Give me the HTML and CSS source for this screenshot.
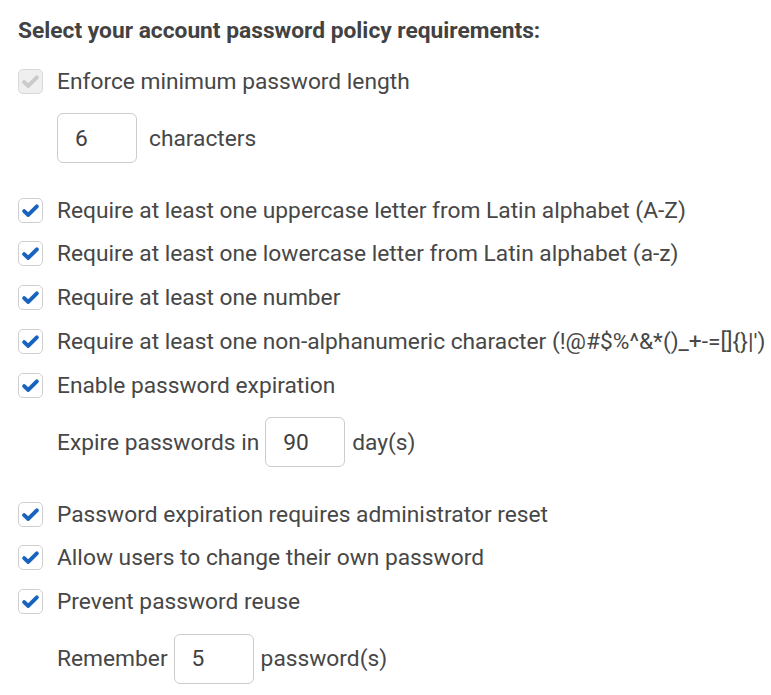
FILE: index.html
```html
<!DOCTYPE html>
<html>
<head>
<meta charset="utf-8">
<link rel="stylesheet" href="styles.css">
</head>
<body>
<div class="policy">
  <h2 class="title">Select your account password policy requirements:</h2>

  <div class="opt first disabled">
    <span class="box"><svg viewBox="0 0 24 24" width="19" height="19"><path d="M4 12.8 L9.2 17.6 L20 6.8" fill="none" stroke="#cacaca" stroke-width="5" stroke-linecap="round" stroke-linejoin="round"/></svg></span>
    <span class="label">Enforce minimum password length</span>
  </div>
  <div class="sub">
    <span class="field">6</span>
    <span class="label unit-wide">characters</span>
  </div>

  <div class="opt group">
    <span class="box"><svg viewBox="0 0 24 24" width="19" height="19"><path d="M4 12.8 L9.2 17.6 L20 6.8" fill="none" stroke="#1763bd" stroke-width="5" stroke-linecap="round" stroke-linejoin="round"/></svg></span>
    <span class="label">Require at least one uppercase letter from Latin alphabet (A-Z)</span>
  </div>
  <div class="opt">
    <span class="box"><svg viewBox="0 0 24 24" width="19" height="19"><path d="M4 12.8 L9.2 17.6 L20 6.8" fill="none" stroke="#1763bd" stroke-width="5" stroke-linecap="round" stroke-linejoin="round"/></svg></span>
    <span class="label">Require at least one lowercase letter from Latin alphabet (a-z)</span>
  </div>
  <div class="opt">
    <span class="box"><svg viewBox="0 0 24 24" width="19" height="19"><path d="M4 12.8 L9.2 17.6 L20 6.8" fill="none" stroke="#1763bd" stroke-width="5" stroke-linecap="round" stroke-linejoin="round"/></svg></span>
    <span class="label">Require at least one number</span>
  </div>
  <div class="opt">
    <span class="box"><svg viewBox="0 0 24 24" width="19" height="19"><path d="M4 12.8 L9.2 17.6 L20 6.8" fill="none" stroke="#1763bd" stroke-width="5" stroke-linecap="round" stroke-linejoin="round"/></svg></span>
    <span class="label">Require at least one non-alphanumeric character (!@#$%^&amp;*()_+-=[]{}|')</span>
  </div>
  <div class="opt">
    <span class="box"><svg viewBox="0 0 24 24" width="19" height="19"><path d="M4 12.8 L9.2 17.6 L20 6.8" fill="none" stroke="#1763bd" stroke-width="5" stroke-linecap="round" stroke-linejoin="round"/></svg></span>
    <span class="label">Enable password expiration</span>
  </div>
  <div class="sub">
    <span class="label">Expire passwords in</span>
    <span class="field">90</span>
    <span class="label">day(s)</span>
  </div>

  <div class="opt group">
    <span class="box"><svg viewBox="0 0 24 24" width="19" height="19"><path d="M4 12.8 L9.2 17.6 L20 6.8" fill="none" stroke="#1763bd" stroke-width="5" stroke-linecap="round" stroke-linejoin="round"/></svg></span>
    <span class="label">Password expiration requires administrator reset</span>
  </div>
  <div class="opt">
    <span class="box"><svg viewBox="0 0 24 24" width="19" height="19"><path d="M4 12.8 L9.2 17.6 L20 6.8" fill="none" stroke="#1763bd" stroke-width="5" stroke-linecap="round" stroke-linejoin="round"/></svg></span>
    <span class="label">Allow users to change their own password</span>
  </div>
  <div class="opt">
    <span class="box"><svg viewBox="0 0 24 24" width="19" height="19"><path d="M4 12.8 L9.2 17.6 L20 6.8" fill="none" stroke="#1763bd" stroke-width="5" stroke-linecap="round" stroke-linejoin="round"/></svg></span>
    <span class="label">Prevent password reuse</span>
  </div>
  <div class="sub">
    <span class="label">Remember</span>
    <span class="field">5</span>
    <span class="label">password(s)</span>
  </div>
</div>
</body>
</html>
```
FILE: styles.css
```css
html, body {
  margin: 0;
  padding: 0;
  background: #ffffff;
}
body {
  font-family: Roboto, "Liberation Sans", Arial, sans-serif;
  color: #474747;
}
.policy {
  padding: 18px 0 0 18px;
  display: flex;
  flex-direction: column;
}
.title {
  margin: 0;
  font-size: 22.75px;
  font-weight: 700;
  line-height: 26px;
  color: #424242;
}
.opt {
  display: flex;
  align-items: center;
  height: 25px;
  margin-top: 18.75px;
}
.opt.first {
  margin-top: 24.5px;
}
.opt.group {
  margin-top: 34.5px;
}
.box {
  width: 23px;
  height: 23px;
  border: 1px solid #cfcfcf;
  border-radius: 5px;
  background: #fff;
  display: flex;
  align-items: center;
  justify-content: center;
  box-sizing: content-box;
  flex: none;
}
.disabled .box {
  background: #efefef;
  border-color: #d8d8d8;
}
.label {
  font-size: 22.75px;
  line-height: 25px;
  white-space: nowrap;
}
.opt .label {
  margin-left: 14px;
}
.sub {
  display: flex;
  align-items: center;
  gap: 6px;
  margin: 19.5px 0 0 39px;
  height: 50px;
}
.sub .field + .label {
  margin-left: 1px;
}
.sub .field + .unit-wide {
  margin-left: 6px;
}
.field {
  width: 78px;
  height: 48px;
  border: 1px solid #cccccc;
  border-radius: 6px;
  box-sizing: content-box;
  display: flex;
  align-items: center;
  font-size: 22.75px;
  text-indent: 17px;
  color: #404040;
  flex: none;
}
```
